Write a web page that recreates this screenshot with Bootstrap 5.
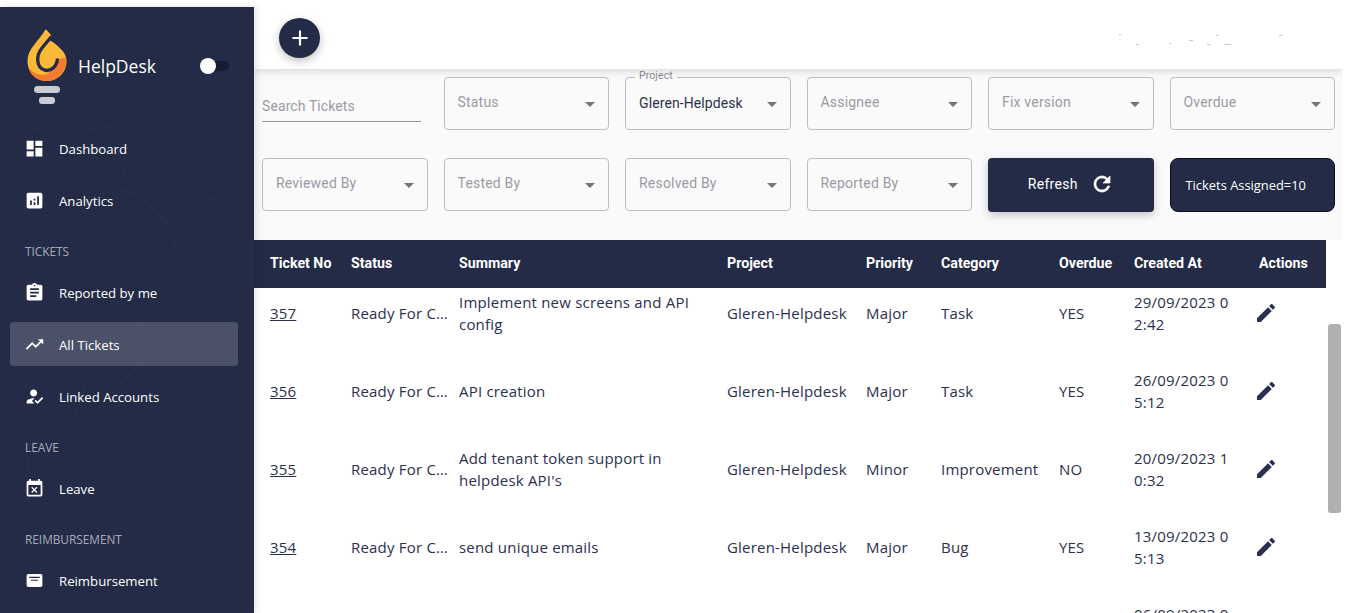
<!DOCTYPE html>
<html lang="en">
<head>
<meta charset="utf-8">
<title>HelpDesk</title>
<link href="https://cdn.jsdelivr.net/npm/bootstrap@5.3.0/dist/css/bootstrap.min.css" rel="stylesheet">
<style>
html,body{height:613px;overflow:hidden;background:#fff;}
body{font-family:"Roboto",sans-serif;color:#2b3050;}
.hd-side{width:254px;height:606px;margin-top:7px;background:#232b47;color:#fff;flex:none;font-family:"Open Sans",sans-serif;box-shadow:2px 0 8px rgba(0,0,0,.12);z-index:3;overflow:hidden;}
.hd-bolts{position:absolute;left:0;top:0;pointer-events:none;}
.hd-brand{padding:21px 0 22px 27px;}
.hd-logo{display:block;width:40px;height:76px;flex:none;}
.hd-brandname{font-size:17.5px;margin:0 0 0 11px;width:122px;}
.hd-toggle{width:30px;height:16px;}
.hd-toggle i{position:absolute;left:3px;top:3px;width:26px;height:10px;border-radius:5px;background:#171c30;}
.hd-toggle b{position:absolute;left:0;top:0;width:16px;height:16px;border-radius:50%;background:#fff;}
.hd-item{height:44px;margin:0 16px 8px 10px;padding:4px 0 0 14px;border-radius:4px;color:#fff;font-size:13.2px;text-decoration:none;gap:14px;position:relative;}
.hd-item svg{width:21px;height:21px;fill:#fff;flex:none;margin-top:-4px;}
.hd-item.hd-on{background:rgba(255,255,255,.18);}
.hd-sect{font-size:11.8px;line-height:18px;height:48px;padding:20px 0 0 25px;margin-top:-8px;color:rgba(255,255,255,.62);}
.hd-main{min-width:0;height:613px;width:1089px;flex:none;}
.hd-top{height:69px;background:#fff;box-shadow:0 2px 8px rgba(0,0,0,.14);clip-path:inset(0 0 -14px 0);position:relative;z-index:2;padding:18px 0 0 25px;}
.hd-fab{width:41px;height:40px;border:0;border-radius:50%;background:#232b47;padding:0;box-shadow:0 3px 8px rgba(0,0,0,.25);}
.hd-fab svg{width:26px;height:26px;fill:#fff;}
.hd-specks{position:absolute;left:865px;top:32px;}
.hd-filters{height:171px;background:#fafafa;padding:8px;display:grid;grid-template-columns:repeat(6,1fr);grid-template-rows:53px 54px;column-gap:16px;row-gap:28px;}
.hd-search{padding-top:20px;width:159px;}
.hd-search span{display:block;height:25px;border-bottom:1px solid #999;font-size:14px;line-height:18px;color:#9a9aa5;letter-spacing:.1px;}
.hd-sel{height:53px;border:1px solid #bdbdbd;border-radius:4px;position:relative;padding:15px 0 0 13px;font-size:14px;line-height:19px;color:#9a9aa5;letter-spacing:.2px;}
.hd-sel::after{content:"";position:absolute;right:13px;top:24px;border-style:solid;border-width:5px 5px 0;border-color:#757575 transparent transparent;}
.hd-sel.hd-val{color:#2b3050;padding-top:16px;letter-spacing:.1px;}
.hd-legend{position:absolute;left:9px;top:-9px;padding:0 4px;background:#fafafa;font-size:10.5px;line-height:14px;color:#8a8a95;}
.hd-refresh{height:54px;border:0;border-radius:4px;background:#232b47;color:#fff;font-size:14px;font-weight:400;box-shadow:0 3px 8px rgba(0,0,0,.22);gap:12px;letter-spacing:.3px;padding:0 0 2px 0;}
.hd-refresh svg{width:24px;height:24px;fill:#fff;stroke:#fff;stroke-width:.7;}
.hd-count{height:54px;border:1px solid #0d1020;border-radius:8px;background:#232b47;color:#fff;font-family:"Open Sans",sans-serif;font-size:12.9px;padding:1px 0 0 15px;}
.hd-head{width:1072px;}
.hd-bodywrap{width:1072px;height:325px;overflow:hidden;}
.hd-table{table-layout:fixed;width:1072px;margin:0;border-collapse:collapse;}
.hd-table.hd-scrolled{margin-top:-14px;}
.hd-table th{height:48px;background:#232b47;color:#fff;font-family:"Roboto",sans-serif;font-size:14.2px;font-weight:700;padding:0 0 1px 16px;vertical-align:middle;white-space:nowrap;border:0;}
.hd-table td{height:78px;background:#fff;color:#2b3050;font-family:"Open Sans",sans-serif;font-size:15px;line-height:22.5px;padding:0 8px 0 16px;vertical-align:middle;border:0;letter-spacing:.2px;}
.hd-table td a{color:#2b3050;}
.hd-table td.hd-nowrap{white-space:nowrap;}
.hd-table td.hd-date{word-break:break-all;padding-right:10px;}
.hd-table .hd-trunc{display:block;width:98px;overflow:hidden;white-space:nowrap;text-overflow:ellipsis;}
.hd-table svg{width:24px;height:24px;fill:#2b3050;margin-left:-5px;display:block;}
.hd-track{width:17px;flex:none;padding:84px 0 0 2px;}
.hd-thumb{display:block;width:13px;height:189px;background:#b0b0b0;border-radius:3px;}
</style>
</head>
<body>
<div class="d-flex">
  <aside class="hd-side position-relative">
    <svg class="hd-bolts" width="254" height="606" viewBox="0 0 254 606" fill="none" stroke="#fff" stroke-opacity=".022" stroke-width="1.5">
      <path d="M25 120 60 127 110 120 125 165 115 180 140 190 165 215 180 250 170 280 135 330 95 350 75 410 25 440 30 470"/>
      <path d="M165 215 215 190 240 240M110 120 120 105M100 290 130 300 150 345 100 400M190 290 230 320 254 325"/>
    </svg>
    <div class="hd-brand d-flex align-items-center position-relative">
      <svg class="hd-logo" viewBox="27 27 40 76">
        <path fill="#fbb937" d="M45.500 28.500C47.500 29.500 50 32.500 51.500 35L49 39 53.500 41.500C60 47 66.500 52 66.500 60 66.500 72 57.500 80 47 80 36 80 27.500 71.500 27.500 60 27.500 48 38 41 45.500 28.500Z"/>
        <path fill="#f47b30" d="M28.500 66C32 72 39 74.500 45 73.500 52 72 55 64 58 60 60 57.500 63 56.500 66.300 57.500 67 70 57.500 80 47 80 37 80 30 74 28.500 66Z"/>
        <path fill="none" stroke="#232b47" stroke-width="3.400" d="M51.500 35.500 42 47C35.500 55 36.500 66.500 44.500 69 51.500 71 57 65 57.500 57.500"/>
        <rect x="34" y="85" width="26" height="7" rx="3.500" fill="#c9ccd2"/>
        <rect x="39" y="96" width="16" height="7" rx="3" fill="#c9ccd2"/>
      </svg>
      <p class="hd-brandname">HelpDesk</p>
      <span class="hd-toggle d-block position-relative"><i></i><b></b></span>
    </div>
    <a class="hd-item d-flex align-items-center" href="#"><svg viewBox="0 0 24 24"><path d="M3 13h8V3H3v10zm0 8h8v-6H3v6zm10 0h8V11h-8v10zm0-18v6h8V3h-8z"/></svg>Dashboard</a>
    <a class="hd-item d-flex align-items-center" href="#"><svg viewBox="0 0 24 24"><path d="M19 3H5c-1.100 0-2 .9-2 2v14c0 1.100.9 2 2 2h14c1.100 0 2-.9 2-2V5c0-1.100-.9-2-2-2zM9 17H7v-5h2v5zm4 0h-2v-3h2v3zm0-5h-2v-2h2v2zm4 5h-2V7h2v10z"/></svg>Analytics</a>
    <div class="hd-sect">TICKETS</div>
    <a class="hd-item d-flex align-items-center" href="#"><svg viewBox="0 0 24 24"><path d="M19 3h-4.180C14.400 1.840 13.300 1 12 1c-1.300 0-2.400.84-2.820 2H5c-1.100 0-2 .9-2 2v14c0 1.100.9 2 2 2h14c1.100 0 2-.9 2-2V5c0-1.100-.9-2-2-2zm-7 0c.55 0 1 .45 1 1s-.45 1-1 1-1-.45-1-1 .45-1 1-1zm2 14H7v-2h7v2zm3-4H7v-2h10v2zm0-4H7V7h10v2z"/></svg>Reported by me</a>
    <a class="hd-item hd-on d-flex align-items-center" href="#"><svg viewBox="0 0 24 24"><path d="M16 6l2.290 2.290-4.880 4.880-4-4L2 16.590 3.410 18l6-6 4 4 6.300-6.290L22 12V6z"/></svg>All Tickets</a>
    <a class="hd-item d-flex align-items-center" href="#"><svg viewBox="0 0 24 24"><path d="M9 17l3-2.940c-.39-.04-.68-.06-1-.06-2.670 0-8 1.340-8 4v2h9l-3-3zm2-5c2.210 0 4-1.790 4-4s-1.790-4-4-4-4 1.790-4 4 1.790 4 4 4m4.470 8.500L12 17l1.400-1.410 2.070 2.070 5.130-5.170 1.400 1.410z"/></svg>Linked Accounts</a>
    <div class="hd-sect">LEAVE</div>
    <a class="hd-item d-flex align-items-center" href="#"><svg viewBox="0 0 24 24"><path d="M9.310 17l2.440-2.440L14.190 17l1.060-1.060-2.440-2.440 2.440-2.440L14.190 10l-2.440 2.440L9.310 10l-1.060 1.060 2.440 2.440-2.440 2.440L9.310 17zM19 3h-1V1h-2v2H8V1H6v2H5c-1.110 0-1.990.9-1.990 2L3 19c0 1.100.89 2 2 2h14c1.100 0 2-.9 2-2V5c0-1.100-.9-2-2-2zm0 16H5V8h14v11z"/></svg>Leave</a>
    <div class="hd-sect">REIMBURSEMENT</div>
    <a class="hd-item d-flex align-items-center" href="#"><svg viewBox="0 0 24 24"><path fill-rule="evenodd" d="M5 4.500h14c1.100 0 2 .9 2 2v11c0 1.100-.9 2-2 2H5c-1.100 0-2-.9-2-2v-11c0-1.100.9-2 2-2zM6 7.800v1.300h12V7.800H6zM8 11v1.300h8V11H8z"/></svg>Reimbursement</a>
  </aside>
  <main class="hd-main">
    <div class="hd-top">
      <button class="hd-fab d-flex align-items-center justify-content-center" aria-label="Add"><svg viewBox="0 0 24 24"><path d="M19 13h-6v6h-2v-6H5v-2h6V5h2v6h6v2z"/></svg></button>
      <svg class="hd-specks" width="170" height="16" viewBox="0 0 170 16" fill="#c8c8d0"><rect x="0" y="2" width="2" height="1"/><rect x="17" y="12" width="3" height="1"/><rect x="50" y="11" width="2" height="1"/><rect x="70" y="8" width="4" height="1"/><rect x="97" y="3" width="2" height="1"/><rect x="88" y="12" width="3" height="1"/><rect x="105" y="12" width="7" height="1"/><rect x="160" y="3" width="3" height="1"/></svg>
    </div>
    <div class="hd-filters">
      <div class="hd-search"><span>Search Tickets</span></div>
      <div class="hd-sel">Status</div>
      <div class="hd-sel hd-val"><span class="hd-legend">Project</span>Gleren-Helpdesk</div>
      <div class="hd-sel">Assignee</div>
      <div class="hd-sel">Fix version</div>
      <div class="hd-sel">Overdue</div>
      <div class="hd-sel">Reviewed By</div>
      <div class="hd-sel">Tested By</div>
      <div class="hd-sel">Resolved By</div>
      <div class="hd-sel">Reported By</div>
      <button class="hd-refresh d-flex align-items-center justify-content-center">Refresh<svg viewBox="0 0 24 24"><path d="M17.650 6.350C16.200 4.900 14.210 4 12 4c-4.420 0-7.990 3.580-7.990 8s3.570 8 7.990 8c3.730 0 6.840-2.550 7.730-6h-2.080c-.82 2.330-3.040 4-5.650 4-3.310 0-6-2.690-6-6s2.690-6 6-6c1.660 0 3.140.69 4.220 1.780L13 11h7V4l-2.350 2.350z"/></svg></button>
      <div class="hd-count d-flex align-items-center">Tickets Assigned=10</div>
    </div>
    <div class="d-flex">
      <div>
        <div class="hd-head">
          <table class="table hd-table">
            <colgroup><col style="width:81px"><col style="width:108px"><col style="width:268px"><col style="width:139px"><col style="width:75px"><col style="width:118px"><col style="width:75px"><col style="width:125px"><col style="width:83px"></colgroup>
            <thead><tr><th>Ticket No</th><th>Status</th><th>Summary</th><th>Project</th><th>Priority</th><th>Category</th><th>Overdue</th><th>Created At</th><th>Actions</th></tr></thead>
          </table>
        </div>
        <div class="hd-bodywrap">
          <table class="table hd-table hd-scrolled">
            <colgroup><col style="width:81px"><col style="width:108px"><col style="width:268px"><col style="width:139px"><col style="width:75px"><col style="width:118px"><col style="width:75px"><col style="width:125px"><col style="width:83px"></colgroup>
            <tbody>
              <tr><td><a href="#">357</a></td><td><span class="hd-trunc">Ready For Closure</span></td><td>Implement new screens and API config</td><td class="hd-nowrap">Gleren-Helpdesk</td><td>Major</td><td>Task</td><td>YES</td><td class="hd-date">29/09/2023 02:42</td><td><svg viewBox="0 0 24 24"><path d="M3 17.250V21h3.750L17.810 9.940l-3.750-3.750L3 17.250zM20.710 7.040c.39-.39.39-1.020 0-1.410l-2.340-2.340c-.39-.39-1.020-.39-1.410 0l-1.830 1.830 3.750 3.750 1.830-1.830z"/></svg></td></tr>
              <tr><td><a href="#">356</a></td><td><span class="hd-trunc">Ready For Closure</span></td><td>API creation</td><td class="hd-nowrap">Gleren-Helpdesk</td><td>Major</td><td>Task</td><td>YES</td><td class="hd-date">26/09/2023 05:12</td><td><svg viewBox="0 0 24 24"><path d="M3 17.250V21h3.750L17.810 9.940l-3.750-3.750L3 17.250zM20.710 7.040c.39-.39.39-1.020 0-1.410l-2.340-2.340c-.39-.39-1.020-.39-1.410 0l-1.830 1.830 3.750 3.750 1.830-1.830z"/></svg></td></tr>
              <tr><td><a href="#">355</a></td><td><span class="hd-trunc">Ready For Closure</span></td><td>Add tenant token support in helpdesk API's</td><td class="hd-nowrap">Gleren-Helpdesk</td><td>Minor</td><td>Improvement</td><td>NO</td><td class="hd-date">20/09/2023 10:32</td><td><svg viewBox="0 0 24 24"><path d="M3 17.250V21h3.750L17.810 9.940l-3.750-3.750L3 17.250zM20.710 7.040c.39-.39.39-1.020 0-1.410l-2.340-2.340c-.39-.39-1.020-.39-1.410 0l-1.830 1.830 3.750 3.750 1.830-1.830z"/></svg></td></tr>
              <tr><td><a href="#">354</a></td><td><span class="hd-trunc">Ready For Closure</span></td><td>send unique emails</td><td class="hd-nowrap">Gleren-Helpdesk</td><td>Major</td><td>Bug</td><td>YES</td><td class="hd-date">13/09/2023 05:13</td><td><svg viewBox="0 0 24 24"><path d="M3 17.250V21h3.750L17.810 9.940l-3.750-3.750L3 17.250zM20.710 7.040c.39-.39.39-1.020 0-1.410l-2.340-2.340c-.39-.39-1.020-.39-1.410 0l-1.830 1.830 3.750 3.750 1.830-1.830z"/></svg></td></tr>
              <tr><td></td><td></td><td></td><td></td><td></td><td></td><td></td><td class="hd-date">06/09/2023 05:10</td><td></td></tr>
            </tbody>
          </table>
        </div>
      </div>
      <div class="hd-track"><span class="hd-thumb"></span></div>
    </div>
  </main>
</div>
</body>
</html>
